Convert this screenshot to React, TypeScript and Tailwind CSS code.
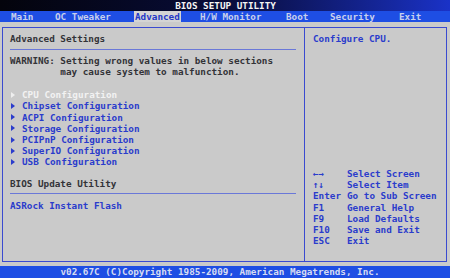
import React from "react";

const items = [
  "CPU Configuration",
  "Chipset Configuration",
  "ACPI Configuration",
  "Storage Configuration",
  "PCIPnP Configuration",
  "SuperIO Configuration",
  "USB Configuration",
];

const keys: [string, string][] = [
  ["←→", "Select Screen"],
  ["↑↓", "Select Item"],
  ["Enter", "Go to Sub Screen"],
  ["F1", "General Help"],
  ["F9", "Load Defaults"],
  ["F10", "Save and Exit"],
  ["ESC", "Exit"],
];

function Arrow({ color }: { color: string }) {
  return (
    <svg width="4" height="6" viewBox="0 0 4 6" className="shrink-0">
      <path d="M0 0 L4 3 L0 6 Z" fill={color} />
    </svg>
  );
}

export default function App() {
  return (
    <div
      className="flex h-[278px] w-[450px] flex-col overflow-hidden bg-[#cacaca] text-[9.3px] leading-[11.2px] font-bold"
      style={{ fontFamily: '"DejaVu Sans Mono", "Liberation Mono", monospace' }}
    >
      {/* title */}
      <div className="flex h-[11px] items-center justify-center bg-gradient-to-r from-[#04040c] via-[#080c3a] to-[#1a32c8] text-[#f4f4f4]">
        <span className="pl-[1px]">BIOS SETUP UTILITY</span>
      </div>

      {/* tabs */}
      <div className="flex h-[11px] items-center bg-[#1e4ee4] pl-[11px] text-[#c8d0ec]">
        <div className="w-[44px]">Main</div>
        <div className="w-[79px]">OC Tweaker</div>
        <div className="w-[66px]">
          <span className="bg-[#d4d4d4] px-[1px] text-[#2438c8]">Advanced</span>
        </div>
        <div className="w-[86px]">H/W Monitor</div>
        <div className="w-[44px]">Boot</div>
        <div className="w-[69px]">Security</div>
        <div>Exit</div>
      </div>

      {/* body */}
      <div className="flex-1 pt-[5px] pb-[4px] pl-[2px] pr-[3px]">
        <div className="flex h-full border border-[#3a4ad0]">
          <div className="flex w-[302px] flex-col border-r border-[#3a4ad0] pt-[5px] pl-[7px] pr-[8px]">
            <div className="text-[#333338]">Advanced Settings</div>
            <div className="mt-[5px] h-px bg-[#6a78d8]" />
            <div className="mt-[5px] whitespace-pre text-[#333338]">
              {"WARNING: Setting wrong values in below sections\n         may cause system to malfunction."}
            </div>
            <div className="mt-[11.6px] flex flex-col">
              {items.map((it, i) => (
                <div key={it} className="flex items-center">
                  <span className="flex w-[12px] pl-[1px]">
                    <Arrow color={i === 0 ? "#eeeeee" : "#2a3ccc"} />
                  </span>
                  <span className={i === 0 ? "text-[#f2f2f2]" : "text-[#2a3ccc]"}>{it}</span>
                </div>
              ))}
            </div>
            <div className="mt-[10.6px] text-[#333338]">BIOS Update Utility</div>
            <div className="mt-[4px] h-px bg-[#6a78d8]" />
            <div className="mt-[6px] text-[#2a3ccc]">ASRock Instant Flash</div>
          </div>

          <div className="flex flex-1 flex-col pt-[5px] pl-[8px] text-[#2a3ccc]">
            <div>Configure CPU.</div>
            <div className="mt-[123.8px] flex flex-col">
              {keys.map(([k, d]) => (
                <div key={k} className="flex">
                  <span className="w-[34px]">{k}</span>
                  <span>{d}</span>
                </div>
              ))}
            </div>
          </div>
        </div>
      </div>

      {/* footer */}
      <div className="flex h-[12px] items-center justify-center bg-[#1e4ee4] pr-[10px] text-[#d6dcf2]">
        <span>v02.67C (C)Copyright 1985-2009, American Megatrends, Inc.</span>
      </div>
    </div>
  );
}
